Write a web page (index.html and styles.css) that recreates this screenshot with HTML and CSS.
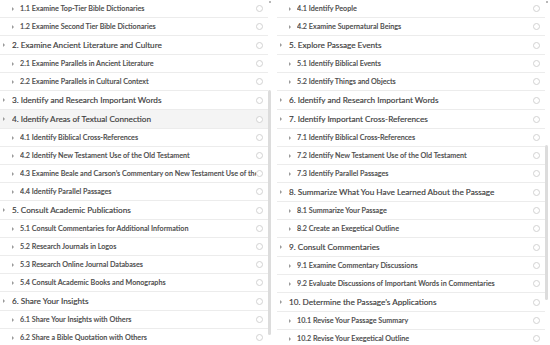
FILE: index.html
```html
<!DOCTYPE html>
<html lang="en">

<head>
    <meta charset="UTF-8">
    <meta name="viewport" content="width=device-width, initial-scale=1.0">
    <title>Passage Guide Steps</title>
    <link rel="stylesheet" href="styles.css">
</head>

<body>
    <div class="panes">
        <section class="pane">
            <ul class="steps">
                <li class="step sub"><span class="mark"></span><span class="label">1.1 Examine Top-Tier Bible Dictionaries</span><span class="radio"></span></li>
                <li class="step sub"><span class="mark"></span><span class="label">1.2 Examine Second Tier Bible Dictionaries</span><span class="radio"></span></li>
                <li class="step head"><span class="mark"></span><span class="label">2. Examine Ancient Literature and Culture</span><span class="radio"></span></li>
                <li class="step sub"><span class="mark"></span><span class="label">2.1 Examine Parallels in Ancient Literature</span><span class="radio"></span></li>
                <li class="step sub"><span class="mark"></span><span class="label">2.2 Examine Parallels in Cultural Context</span><span class="radio"></span></li>
                <li class="step head"><span class="mark"></span><span class="label">3. Identify and Research Important Words</span><span class="radio"></span></li>
                <li class="step head hover"><span class="mark"></span><span class="label">4. Identify Areas of Textual Connection</span><span class="radio"></span></li>
                <li class="step sub"><span class="mark"></span><span class="label">4.1 Identify Biblical Cross-References</span><span class="radio"></span></li>
                <li class="step sub"><span class="mark"></span><span class="label">4.2 Identify New Testament Use of the Old Testament</span><span class="radio"></span></li>
                <li class="step sub"><span class="mark"></span><span class="label">4.3 Examine Beale and Carson’s Commentary on New Testament Use of the Old Testament</span><span class="radio"></span></li>
                <li class="step sub"><span class="mark"></span><span class="label">4.4 Identify Parallel Passages</span><span class="radio"></span></li>
                <li class="step head"><span class="mark"></span><span class="label">5. Consult Academic Publications</span><span class="radio"></span></li>
                <li class="step sub"><span class="mark"></span><span class="label">5.1 Consult Commentaries for Additional Information</span><span class="radio"></span></li>
                <li class="step sub"><span class="mark"></span><span class="label">5.2 Research Journals in Logos</span><span class="radio"></span></li>
                <li class="step sub"><span class="mark"></span><span class="label">5.3 Research Online Journal Databases</span><span class="radio"></span></li>
                <li class="step sub"><span class="mark"></span><span class="label">5.4 Consult Academic Books and Monographs</span><span class="radio"></span></li>
                <li class="step head"><span class="mark"></span><span class="label">6. Share Your Insights</span><span class="radio"></span></li>
                <li class="step sub"><span class="mark"></span><span class="label">6.1 Share Your Insights with Others</span><span class="radio"></span></li>
                <li class="step sub"><span class="mark"></span><span class="label">6.2 Share a Bible Quotation with Others</span><span class="radio"></span></li>
            </ul>
            <div class="track"><div class="arrow"></div><div class="thumb thumbLeft"></div></div>
        </section>

        <section class="pane">
            <ul class="steps">
                <li class="step sub"><span class="mark"></span><span class="label">4.1 Identify People</span><span class="radio"></span></li>
                <li class="step sub"><span class="mark"></span><span class="label">4.2 Examine Supernatural Beings</span><span class="radio"></span></li>
                <li class="step head"><span class="mark"></span><span class="label">5. Explore Passage Events</span><span class="radio"></span></li>
                <li class="step sub"><span class="mark"></span><span class="label">5.1 Identify Biblical Events</span><span class="radio"></span></li>
                <li class="step sub"><span class="mark"></span><span class="label">5.2 Identify Things and Objects</span><span class="radio"></span></li>
                <li class="step head"><span class="mark"></span><span class="label">6. Identify and Research Important Words</span><span class="radio"></span></li>
                <li class="step head"><span class="mark"></span><span class="label">7. Identify Important Cross-References</span><span class="radio"></span></li>
                <li class="step sub"><span class="mark"></span><span class="label">7.1 Identify Biblical Cross-References</span><span class="radio"></span></li>
                <li class="step sub"><span class="mark"></span><span class="label">7.2 Identify New Testament Use of the Old Testament</span><span class="radio"></span></li>
                <li class="step sub"><span class="mark"></span><span class="label">7.3 Identify Parallel Passages</span><span class="radio"></span></li>
                <li class="step head"><span class="mark"></span><span class="label">8. Summarize What You Have Learned About the Passage</span><span class="radio"></span></li>
                <li class="step sub"><span class="mark"></span><span class="label">8.1 Summarize Your Passage</span><span class="radio"></span></li>
                <li class="step sub"><span class="mark"></span><span class="label">8.2 Create an Exegetical Outline</span><span class="radio"></span></li>
                <li class="step head"><span class="mark"></span><span class="label">9. Consult Commentaries</span><span class="radio"></span></li>
                <li class="step sub"><span class="mark"></span><span class="label">9.1 Examine Commentary Discussions</span><span class="radio"></span></li>
                <li class="step sub"><span class="mark"></span><span class="label">9.2 Evaluate Discussions of Important Words in Commentaries</span><span class="radio"></span></li>
                <li class="step head"><span class="mark"></span><span class="label">10. Determine the Passage’s Applications</span><span class="radio"></span></li>
                <li class="step sub"><span class="mark"></span><span class="label">10.1 Revise Your Passage Summary</span><span class="radio"></span></li>
                <li class="step sub"><span class="mark"></span><span class="label">10.2 Revise Your Exegetical Outline</span><span class="radio"></span></li>
            </ul>
            <div class="track"><div class="arrow"></div><div class="thumb thumbRight"></div></div>
        </section>
    </div>
</body>

</html>
```

FILE: styles.css
```css
html,
body,
ul,
li {
    padding: 0;
    margin: 0;
    list-style: none;
    box-sizing: border-box;
}

html,
body {
    width: 550px;
    height: 345px;
    overflow: hidden;
    background: #fff;
    font-family: "Lato", "Liberation Sans", sans-serif;
    -webkit-font-smoothing: antialiased;
}

.panes {
    display: flex;
    gap: 5px;
    height: 345px;
}

.pane {
    display: flex;
    width: 272px;
    height: 345px;
    overflow: hidden;
}

.pane + .pane {
    width: 273px;
}

.steps {
    width: 268px;
    flex: none;
}

.step {
    display: flex;
    align-items: center;
    height: 18px;
    border-bottom: 1px solid #ececec;
    padding-right: 5px;
}

.step.head {
    height: 19px;
}

.step.hover {
    background: #f4f4f4;
}

.mark {
    flex: none;
    width: 0;
    height: 0;
    border-top: 2px solid transparent;
    border-bottom: 2px solid transparent;
    border-left: 2px solid #9a9a9a;
}

.sub .mark {
    margin: 0 6px 0 12px;
}

.head .mark {
    margin: 0 7px 0 3px;
}

.label {
    flex: 1;
    min-width: 0;
    white-space: nowrap;
    overflow: hidden;
}

.sub .label {
    font-size: 7.2px;
    font-weight: 600;
    color: #4c4c4c;
    -webkit-text-stroke: 0.1px #4c4c4c;
}

.head .label {
    font-size: 8.2px;
    color: #3c3c3c;
    -webkit-text-stroke: 0.15px #3c3c3c;
}

.radio {
    flex: none;
    width: 7px;
    height: 7px;
    border: 1px solid #d2d2d2;
    border-radius: 50%;
    box-sizing: border-box;
    background: #fff;
}

.track {
    width: 4px;
    flex: none;
}

.arrow {
    width: 2px;
    height: 2px;
    margin: 1px 0 0 1px;
    background: #b8b8b8;
}

.thumb {
    width: 3px;
    background: #dcdcdc;
    border-radius: 2px;
}

.thumbLeft {
    margin-top: 87px;
    height: 245px;
}

.thumbRight {
    margin-top: 142px;
    height: 155px;
}
```
